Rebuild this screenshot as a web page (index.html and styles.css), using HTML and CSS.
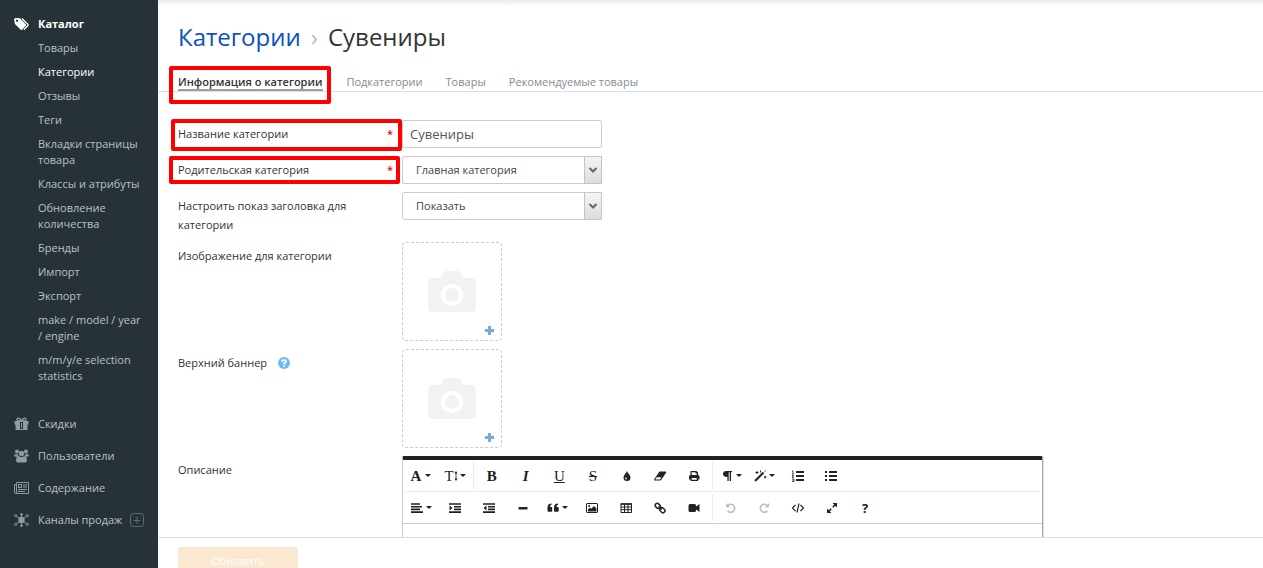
FILE: index.html
```html
<!DOCTYPE html>
<html lang="ru">
<head>
<meta charset="utf-8">
<title>Категории › Сувениры</title>
<link rel="stylesheet" href="styles.css">
</head>
<body>
<div class="app">
  <nav class="sidebar">
    <a class="section active" href="#">
      <svg class="section-icon" viewBox="0 0 15 14"><path fill="currentColor" fill-rule="evenodd" d="M0 2 1.500 1 6 1.200 12 7.400v1L7.800 13H7L.9 7zM2.900 2.500a1.100 1.100 0 1 0 .1 0z"/><path fill="none" stroke="currentColor" stroke-width="1.300" d="M8 1.500 14 7.500v1L9.800 12.800"/></svg>
      Каталог</a>
    <ul class="subnav">
      <li><a href="#">Товары</a></li>
      <li><a class="current" href="#">Категории</a></li>
      <li><a href="#">Отзывы</a></li>
      <li><a href="#">Теги</a></li>
      <li><a href="#">Вкладки страницы товара</a></li>
      <li><a href="#">Классы и атрибуты</a></li>
      <li><a href="#">Обновление количества</a></li>
      <li><a href="#">Бренды</a></li>
      <li><a href="#">Импорт</a></li>
      <li><a href="#">Экспорт</a></li>
      <li><a href="#">make / model / year / engine</a></li>
      <li><a href="#">m/m/y/e selection statistics</a></li>
    </ul>
    <div class="sections">
      <a class="section" href="#">
        <svg class="section-icon" viewBox="0 0 15 14"><path fill="currentColor" fill-rule="evenodd" d="M.5 4h14v3.500h-1V13h-12V7.500h-1zM6 5v7h3V5zM7 6h1v5H7z"/><path fill="none" stroke="currentColor" stroke-width="1.300" d="M7.500 4C6 1 3 0 3 2.500 3 4 5 4 7.500 4 9 1 12 0 12 2.500 12 4 10 4 7.500 4z"/></svg>
        Скидки</a>
      <a class="section" href="#">
        <svg class="section-icon" viewBox="0 0 15 14"><g fill="currentColor"><circle cx="3" cy="2.600" r="2"/><circle cx="12" cy="2.600" r="2"/><circle cx="7.500" cy="4.400" r="2.700"/><path d="M.3 5.200h3.500l.8 2.500H1.500C.5 7.700.2 6.500.3 5.200zM14.700 5.200h-3.500l-.8 2.500h3.100c1 0 1.300-1.200 1.200-2.500zM4.500 7q3 2 6 0c2 .3 2.600 3 2.400 5q-.2 1.300-1.500 1.500H3.600Q2.300 13.300 2.100 12c-.2-2 .4-4.700 2.400-5z"/></g></svg>
        Пользователи</a>
      <a class="section" href="#">
        <svg class="section-icon" viewBox="0 0 15 14"><path fill="none" stroke="currentColor" d="M2.500 1.500h12v11h-13q-1 0-1-1.500V3.500h2M2.500 1.500V11q0 1.500-1 1.500M9 4h4M9 6h4M4 8.500h9M4 10.500h7"/><path fill="currentColor" fill-rule="evenodd" d="M4 3h4v4H4zM5 4v2h2V4z"/></svg>
        Содержание</a>
      <a class="section" href="#">
        <svg class="section-icon" viewBox="0 0 15 14"><circle cx="7.500" cy="7" r="3.200" fill="currentColor"/><path stroke="currentColor" d="M7.500 1v12M2 3l11 8M2 11l11-8"/><g fill="#263238" stroke="currentColor"><circle cx="1.700" cy="2.600" r="1.100"/><circle cx="13.300" cy="2.600" r="1.100"/><circle cx="1.700" cy="11.400" r="1.100"/><circle cx="13.300" cy="11.400" r="1.100"/></g><circle cx="7.500" cy="1.200" r="1.200" fill="currentColor"/><circle cx="7.500" cy="12.800" r="1.200" fill="currentColor"/></svg>
        Каналы продаж
        <svg class="add-icon" viewBox="0 0 14 14"><rect x=".5" y=".5" width="13" height="13" rx="3" fill="none" stroke="currentColor"/><path stroke="currentColor" d="M3.500 7.500h7M7 4v7"/></svg></a>
    </div>
  </nav>

  <main class="main">
    <header class="heading">
      <h1><a href="#">Категории</a><span class="crumb">›</span>Сувениры</h1>
    </header>
    <div class="tabs">
      <a class="tab active" href="#">Информация о категории<span class="mark mark-tab"></span></a>
      <a class="tab" href="#">Подкатегории</a>
      <a class="tab" href="#">Товары</a>
      <a class="tab" href="#">Рекомендуемые товары</a>
    </div>

    <form class="form" id="category">
      <div class="row">
        <label class="label required" for="name">Название категории<span class="star">*</span><span class="mark mark-name"></span></label>
        <input class="text" id="name" type="text" value="Сувениры">
      </div>
      <div class="row">
        <label class="label required" for="parent">Родительская категория<span class="star">*</span><span class="mark mark-parent"></span></label>
        <div class="select"><select id="parent"><option>Главная категория</option></select><span class="arrow"><svg viewBox="0 0 10 8"><path d="M1.500 2 5 5.500 8.500 2"/></svg></span></div>
      </div>
      <div class="row">
        <label class="label" for="title">Настроить показ заголовка для категории</label>
        <div class="select"><select id="title"><option>Показать</option></select><span class="arrow"><svg viewBox="0 0 10 8"><path d="M1.500 2 5 5.500 8.500 2"/></svg></span></div>
      </div>
      <div class="row">
        <span class="label">Изображение для категории</span>
        <button class="upload" type="button" aria-label="Изображение для категории">
          <svg class="camera" viewBox="0 0 48 42"><path fill="#f2f2f2" d="M5 7h8l2-5q1-2 3-2h12q2 0 3 2l2 5h8q5 0 5 5v24q0 5-5 5H5q-5 0-5-5V12q0-5 5-5z"/><circle cx="24" cy="24" r="9" fill="none" stroke="#fff" stroke-width="4"/></svg>
          <svg class="plus" viewBox="0 0 9 9"><path d="M3 0h3v3h3v3H6v3H3V6H0V3h3z"/></svg>
        </button>
      </div>
      <div class="row">
        <span class="label">Верхний баннер <svg class="help" viewBox="0 0 12 12"><circle cx="6" cy="6" r="6" fill="#6dbdf5"/><path fill="none" stroke="#fff" stroke-width="1.700" d="M4 4.700Q4 3 6 3t2 1.500Q8 5.500 6 6.200v1.300M6 8.300V10"/></svg></span>
        <button class="upload" type="button" aria-label="Верхний баннер">
          <svg class="camera" viewBox="0 0 48 42"><path fill="#f2f2f2" d="M5 7h8l2-5q1-2 3-2h12q2 0 3 2l2 5h8q5 0 5 5v24q0 5-5 5H5q-5 0-5-5V12q0-5 5-5z"/><circle cx="24" cy="24" r="9" fill="none" stroke="#fff" stroke-width="4"/></svg>
          <svg class="plus" viewBox="0 0 9 9"><path d="M3 0h3v3h3v3H6v3H3V6H0V3h3z"/></svg>
        </button>
      </div>
      <div class="row">
        <label class="label" for="description">Описание</label>
        <div class="editor">
          <div class="toolbar">
            <div class="tools tools-font">
              <button type="button" class="b">A<i class="caret"></i></button>
              <button type="button" class="size"><span>T</span><svg class="updown" viewBox="0 0 4 12"><path stroke="currentColor" stroke-width=".8" d="M2 2v8"/><path fill="currentColor" d="M.5 3.500 2 1l1.500 2.500zM.5 8.500h3L2 11z"/></svg><i class="caret"></i></button>
            </div>
            <span class="sep"></span>
            <div class="tools tools-style">
              <button type="button" class="b">B</button>
              <button type="button" class="i">I</button>
              <button type="button" class="u">U</button>
              <button type="button" class="s">S</button>
              <button type="button" aria-label="Цвет"><svg viewBox="0 0 14 12"><path fill="currentColor" fill-rule="evenodd" d="M7 1c.5 2 3.500 4 3.500 6.500a3.500 3.500 0 0 1-7 0C3.500 5 6.500 3 7 1zM5.800 7q-1.300 1.500 0 2.500 1.300 0 1-1.200z"/></svg></button>
              <button type="button" aria-label="Очистить"><svg viewBox="0 0 14 12"><path fill="currentColor" fill-rule="evenodd" d="M6.500 1.500h6q1 0 .7 1L8.500 9.500q-.5 1-1.500 1H2q-1.500 0-.8-1.200zM3.800 7.200 2.200 9.500H7l1.500-2.300z"/></svg></button>
              <button type="button" aria-label="Печать"><svg viewBox="0 0 14 12"><path fill="currentColor" fill-rule="evenodd" d="M3.500 1h6l1.500 1.500V5q1.500 0 1.500 1.500v3H11V11H3.500V9.500H2v-3Q2 5 3.500 5zM4.700 2.200V5h5V3.500H8.500V2.200zM4.700 8v1.800h5V8z"/></svg></button>
            </div>
            <span class="sep"></span>
            <div class="tools tools-4">
              <button type="button" aria-label="Формат абзаца"><svg viewBox="0 0 14 12"><path fill="currentColor" d="M6.500 1H12v1.300h-1V11H9.700V2.300h-1V11H7.400V7Q3 7 3 4t3.500-3z"/></svg><i class="caret"></i></button>
              <button type="button" aria-label="Стиль абзаца"><svg viewBox="0 0 14 12"><path stroke="currentColor" stroke-width="2" d="M2 11 10.500 2.500"/><path stroke="currentColor" d="M4 1v3M2.500 2.500h3M7.500.5v2M12 6v2.500M11 7h2.500M12 .5v1"/></svg><i class="caret"></i></button>
              <button type="button" aria-label="Нумерованный список"><svg viewBox="0 0 14 12"><path stroke="currentColor" stroke-width="2" d="M5 2h8M5 6h8M5 10h8"/><path fill="none" stroke="currentColor" stroke-width=".8" d="M1 1h1v3M1 4h2M1 5.500h1.500L1 7.300h2M1 9h2v2.500H1M1.500 10.200H3"/></svg></button>
              <button type="button" aria-label="Список"><svg viewBox="0 0 14 12"><path stroke="currentColor" stroke-width="2" d="M1 2h2M1 6h2M1 10h2M5 2h8M5 6h8M5 10h8"/></svg></button>
            </div>
          </div>
          <div class="toolbar">
            <div class="tools tools-insert">
              <button type="button" aria-label="Выравнивание"><svg viewBox="0 0 14 12"><path stroke="currentColor" stroke-width="1.600" d="M1 2h9M1 4.700h11M1 7.400h9M1 10.100h12"/></svg><i class="caret"></i></button>
              <button type="button" aria-label="Увеличить отступ"><svg viewBox="0 0 14 12"><path stroke="currentColor" stroke-width="1.600" d="M1 2h12M6 4.700h7M6 7.400h7M1 10.100h12"/><path fill="currentColor" d="M1.500 3.500 4.500 6l-3 2.500z"/></svg></button>
              <button type="button" aria-label="Уменьшить отступ"><svg viewBox="0 0 14 12"><path stroke="currentColor" stroke-width="1.600" d="M1 2h12M6 4.700h7M6 7.400h7M1 10.100h12"/><path fill="currentColor" d="M4.500 3.500 1.500 6l3 2.500z"/></svg></button>
              <button type="button" aria-label="Линия"><svg viewBox="0 0 14 12"><rect x="2.500" y="5" width="9" height="2.500" rx=".5" fill="currentColor"/></svg></button>
              <button type="button" aria-label="Цитата"><svg viewBox="0 0 14 12"><path fill="currentColor" d="M5.500 1.500v1.200Q4 3 4 5h1.500q.7 0 .7.700v3q0 1-1 1H2.500q-1 0-1-1V5.500q0-4 4-4zM12 1.500v1.200q-1.500.3-1.500 2.300H12q.7 0 .7.700v3q0 1-1 1H9q-1 0-1-1V5.500q0-4 4-4z"/></svg><i class="caret"></i></button>
              <button type="button" aria-label="Изображение"><svg viewBox="0 0 14 12"><rect x="1.500" y="1.500" width="11" height="9" rx=".5" fill="none" stroke="currentColor"/><path fill="currentColor" d="M3 9.500V7.500l2-2 1.200 1.200L9 4l2.500 2.500v3z"/><circle cx="4.200" cy="4" r="1" fill="currentColor"/></svg></button>
              <button type="button" aria-label="Таблица"><svg viewBox="0 0 14 12"><path fill="none" stroke="currentColor" d="M2 2h10.500v8.500H2zM2 5h10.500M2 7.700h10.500M5.500 2v8.500M9 2v8.500"/><path stroke="currentColor" stroke-width="1.500" d="M1.500 2H13"/></svg></button>
              <button type="button" aria-label="Ссылка"><svg viewBox="0 0 14 12"><g fill="none" stroke="currentColor" stroke-width="1.500"><rect x="2" y="1.800" width="5.500" height="4" rx="2" transform="rotate(42 4.700 3.800)"/><rect x="6.700" y="6.200" width="5.500" height="4" rx="2" transform="rotate(42 9.400 8.200)"/><path d="M5.500 4.500 8.700 7.500"/></g></svg></button>
              <button type="button" aria-label="Видео"><svg viewBox="0 0 14 12"><path fill="currentColor" d="M3 2h4.500Q9 2 9 3.500v1L12.500 2v8L9 7.500v1Q9 10 7.500 10H3q-1.500 0-1.500-1.500v-5Q1.500 2 3 2z"/></svg></button>
            </div>
            <span class="sep"></span>
            <div class="tools tools-5">
              <button type="button" disabled aria-label="Отменить"><svg viewBox="0 0 14 12"><path fill="none" stroke="currentColor" stroke-width="1.600" d="M4 3.300a4 4 0 1 1-.3 5.600"/><path fill="currentColor" d="M2 1v4.200h4.200z"/></svg></button>
              <button type="button" disabled aria-label="Повторить"><svg viewBox="0 0 14 12"><path fill="none" stroke="currentColor" stroke-width="1.600" d="M10 3.300a4 4 0 1 0 .3 5.600"/><path fill="currentColor" d="M12 1v4.200H7.800z"/></svg></button>
              <button type="button" aria-label="Код"><svg viewBox="0 0 14 12"><path fill="none" stroke="currentColor" stroke-width="1.200" d="M4.500 3 1.500 6l3 3M9.500 3l3 3-3 3M8 1.500 6 10.500"/></svg></button>
              <button type="button" aria-label="Во весь экран"><svg viewBox="0 0 14 12"><path stroke="currentColor" stroke-width="1.600" d="M3.500 9.500 6.300 6.700M7.700 5.300l2.800-2.800"/><path fill="currentColor" d="M2 11V6.500L6.500 11zM12 1v4.500L7.500 1z"/></svg></button>
              <button type="button" class="q">?</button>
            </div>
          </div>
          <textarea class="area" id="description"></textarea>
        </div>
      </div>
    </form>

    <footer class="footer">
      <button class="submit" type="submit" form="category">Обновить</button>
    </footer>
  </main>
</div>
</body>
</html>
```
FILE: styles.css
```css
* {
  box-sizing: border-box;
}

body {
  margin: 0;
  font: 11px/16px "Open Sans", "Noto Sans", sans-serif;
  color: #333;
  background: #fff;
}

a {
  color: inherit;
  text-decoration: none;
}

button,
input,
select,
textarea {
  font: inherit;
  color: inherit;
}

.app {
  display: flex;
  height: 100vh;
  overflow: hidden;
}

/* Sidebar */
.sidebar {
  flex: 0 0 158px;
  padding: 16px 12px 0 14px;
  background: #263238;
  color: #b6c1c8;
}

.section {
  display: flex;
  align-items: center;
  height: 16px;
  white-space: nowrap;
}

.section.active {
  color: #fff;
  font-weight: 700;
}

.section-icon {
  flex: none;
  width: 15px;
  height: 14px;
  margin-right: 9px;
  color: #8f9ba3;
}

.section.active .section-icon {
  color: #fff;
}

.add-icon {
  flex: none;
  width: 14px;
  height: 14px;
  margin-left: 8px;
  color: #5d6a71;
}

.subnav {
  display: grid;
  gap: 8px;
  margin: 8px 0 32px;
  padding: 0 0 0 24px;
  list-style: none;
}

.subnav a {
  display: block;
}

.subnav .current {
  color: #fff;
}

.sections {
  display: grid;
  gap: 16px;
}

/* Main column */
.main {
  display: flex;
  flex: 1;
  flex-direction: column;
  min-width: 0;
  background: linear-gradient(#e9e9e9, #fff 6px);
}

.heading {
  padding: 19px 20px 0;
}

h1 {
  margin: 0;
  font-size: 24px;
  line-height: 36px;
  font-weight: 400;
}

h1 a {
  color: #0b51c0;
}

.crumb {
  margin: 0 10px;
  color: #bbb;
}

.tabs {
  display: flex;
  gap: 23px;
  padding: 19px 20px 0;
  border-bottom: 1px solid #dcdfe2;
  color: #7f8b95;
}

.tab {
  position: relative;
  height: 17px;
}

.tab.active {
  padding-right: 1px;
  color: #333;
  font-weight: 600;
  border-bottom: 2px solid #98a1a6;
}

/* Red highlight frames drawn over the content */
.mark {
  position: absolute;
  border: 4px solid #f00;
  border-radius: 2px;
  pointer-events: none;
}

.mark-tab {
  inset: -8px -8px -15px -9px;
}

.mark-name {
  inset: -1px 0 -3px -7px;
}

.mark-parent {
  inset: 0 2px 0 -9px;
}

/* Form */
.form {
  display: grid;
  flex: 1;
  align-content: start;
  gap: 8px;
  min-height: 0;
  padding: 28px 20px 0;
  overflow: hidden;
}

.row {
  display: grid;
  grid-template-columns: 224px minmax(0, 641px);
  align-items: start;
}

.label {
  position: relative;
  padding: 4px 40px 0 0;
  line-height: 19px;
}

.label.required {
  display: flex;
  justify-content: space-between;
  height: 28px;
  padding-right: 9px;
}

.star {
  color: #f00;
  font-weight: 600;
}

.text {
  width: 200px;
  height: 28px;
  padding: 0 7px;
  border: 1px solid #ccc;
  border-radius: 2px;
  background: #fff;
  color: #555;
  font-size: 13px;
}

.select {
  position: relative;
  width: 200px;
  height: 28px;
}

.select select {
  display: block;
  width: 100%;
  height: 100%;
  padding: 0 20px 0 13px;
  border: 1px solid #ccc;
  border-radius: 2px;
  background: #fff;
  color: #444;
  appearance: none;
}

.arrow {
  position: absolute;
  inset: 0 0 0 auto;
  display: grid;
  place-items: center;
  width: 18px;
  border: 1px solid #c4c4c4;
  background: linear-gradient(#f4f4f4, #ddd);
  pointer-events: none;
}

.arrow svg {
  width: 10px;
  height: 8px;
  fill: none;
  stroke: #666;
  stroke-width: 2;
}

.upload {
  position: relative;
  display: grid;
  place-items: center;
  width: 100px;
  height: 99px;
  padding: 0;
  border: 1px dashed #ccc;
  border-radius: 4px;
  background: #fff;
}

.camera {
  width: 48px;
  height: 42px;
}

.plus {
  position: absolute;
  right: 7px;
  bottom: 5px;
  width: 9px;
  height: 9px;
  fill: #70b0d5;
}

.help {
  width: 12px;
  height: 12px;
  margin-left: 8px;
  vertical-align: -2px;
}

/* Rich text editor */
.editor {
  border-top: 4px solid #222;
  border-right: 1px solid #aaa;
  border-left: 1px solid #ccc;
  border-radius: 2px;
  box-shadow: 1px 1px 0 #ddd;
  color: #222;
}

.toolbar {
  display: flex;
  height: 31px;
  margin: 0 2px 0 1px;
}

.toolbar + .toolbar {
  height: 32px;
  border-top: 1px solid #ebebeb;
}

.tools {
  display: flex;
}

.tools-font {
  width: 68px;
}

.tools-style {
  width: 236px;
}

.tools-insert {
  width: 307px;
}

.tools-4 {
  width: 134px;
}

.tools-5 {
  width: 168px;
}

.sep {
  width: 1px;
  margin: 2px 1px;
  background: #ebebeb;
}

.tools button {
  display: flex;
  flex: 1;
  align-items: center;
  justify-content: center;
  min-width: 0;
  padding: 0;
  border: 0;
  background: none;
  font: 15px/16px "Liberation Serif", serif;
}

.tools button:disabled {
  color: #bbb;
}

.tools svg {
  flex: none;
  width: 14px;
  height: 12px;
}

.tools .updown {
  width: 4px;
}

.tools .b {
  font-weight: 700;
}

.tools .i {
  font-style: italic;
  font-weight: 700;
}

.tools .u {
  text-decoration: underline;
}

.tools .s {
  text-decoration: line-through;
}

.tools .q {
  font: 700 13px/16px "Open Sans", sans-serif;
}

.caret {
  margin-left: 4px;
  border: solid transparent;
  border-width: 3px 3px 0;
  border-top-color: #222;
}

svg + .caret {
  margin-left: 2px;
}

.area {
  display: block;
  width: 100%;
  height: 120px;
  border: 0;
  border-top: 1px solid #ccc;
  resize: none;
}

/* Bottom action bar */
.footer {
  flex: 0 0 31px;
  padding: 9px 20px 0;
  border-top: 1px solid #ddd;
  background: #fff;
  overflow: hidden;
}

.submit {
  width: 120px;
  height: 28px;
  padding: 0;
  border: 0;
  border-radius: 2px;
  background: #fbe8d0;
  color: #fff;
  line-height: 12px;
}
```
